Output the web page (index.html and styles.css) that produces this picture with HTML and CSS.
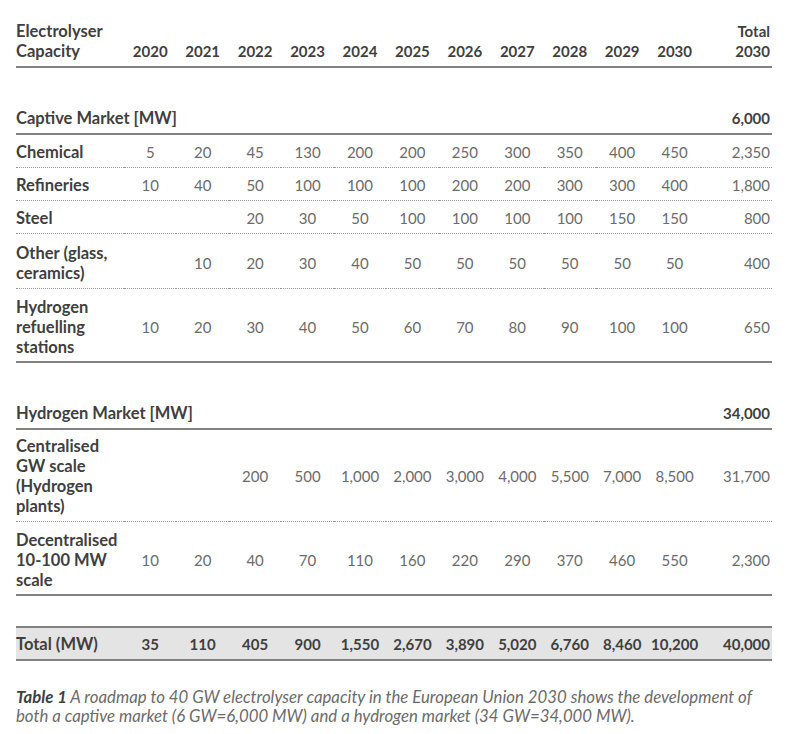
FILE: index.html
```html
<!DOCTYPE html>
<html lang="en">
<head>
<meta charset="utf-8">
<title>Electrolyser capacity roadmap</title>
<link rel="stylesheet" href="styles.css">
</head>
<body>
<div class="page">
<table class="roadmap">
  <colgroup>
    <col class="c-label">
    <col class="c-year"><col class="c-year"><col class="c-year"><col class="c-year"><col class="c-year"><col class="c-year"><col class="c-year"><col class="c-year"><col class="c-year"><col class="c-year"><col class="c-year">
    <col class="c-total">
  </colgroup>
  <thead>
    <tr class="head">
      <th class="label">Electrolyser<br>Capacity</th>
      <th>2020</th><th>2021</th><th>2022</th><th>2023</th><th>2024</th><th>2025</th><th>2026</th><th>2027</th><th>2028</th><th>2029</th><th>2030</th>
      <th class="total">Total<br>2030</th>
    </tr>
  </thead>
  <tbody>
    <tr class="section">
      <th class="label" colspan="12">Captive Market [MW]</th>
      <th class="total">6,000</th>
    </tr>
    <tr class="row dotted">
      <th class="label">Chemical</th>
      <td>5</td><td>20</td><td>45</td><td>130</td><td>200</td><td>200</td><td>250</td><td>300</td><td>350</td><td>400</td><td>450</td>
      <td class="total">2,350</td>
    </tr>
    <tr class="row dotted">
      <th class="label">Refineries</th>
      <td>10</td><td>40</td><td>50</td><td>100</td><td>100</td><td>100</td><td>200</td><td>200</td><td>300</td><td>300</td><td>400</td>
      <td class="total">1,800</td>
    </tr>
    <tr class="row dotted">
      <th class="label">Steel</th>
      <td></td><td></td><td>20</td><td>30</td><td>50</td><td>100</td><td>100</td><td>100</td><td>100</td><td>150</td><td>150</td>
      <td class="total">800</td>
    </tr>
    <tr class="row dotted tall">
      <th class="label">Other (glass,<br>ceramics)</th>
      <td></td><td>10</td><td>20</td><td>30</td><td>40</td><td>50</td><td>50</td><td>50</td><td>50</td><td>50</td><td>50</td>
      <td class="total">400</td>
    </tr>
    <tr class="row solid tall">
      <th class="label">Hydrogen<br>refuelling<br>stations</th>
      <td>10</td><td>20</td><td>30</td><td>40</td><td>50</td><td>60</td><td>70</td><td>80</td><td>90</td><td>100</td><td>100</td>
      <td class="total">650</td>
    </tr>
    <tr class="section">
      <th class="label" colspan="12">Hydrogen Market [MW]</th>
      <th class="total">34,000</th>
    </tr>
    <tr class="row dotted tall">
      <th class="label">Centralised<br>GW scale<br>(Hydrogen<br>plants)</th>
      <td></td><td></td><td>200</td><td>500</td><td>1,000</td><td>2,000</td><td>3,000</td><td>4,000</td><td>5,500</td><td>7,000</td><td>8,500</td>
      <td class="total">31,700</td>
    </tr>
    <tr class="row solid tall">
      <th class="label">Decentralised<br>10-100 MW<br>scale</th>
      <td>10</td><td>20</td><td>40</td><td>70</td><td>110</td><td>160</td><td>220</td><td>290</td><td>370</td><td>460</td><td>550</td>
      <td class="total">2,300</td>
    </tr>
  </tbody>
  <tfoot>
    <tr class="sum">
      <th class="label">Total (MW)</th>
      <td>35</td><td>110</td><td>405</td><td>900</td><td>1,550</td><td>2,670</td><td>3,890</td><td>5,020</td><td>6,760</td><td>8,460</td><td>10,200</td>
      <td class="total">40,000</td>
    </tr>
  </tfoot>
</table>
<p class="caption"><b>Table 1</b> A roadmap to 40 GW electrolyser capacity in the European Union 2030 shows the development of both a captive market (6 GW=6,000 MW) and a hydrogen market (34 GW=34,000 MW).</p>
</div>
</body>
</html>
```
FILE: styles.css
```css
html, body {
  margin: 0;
  padding: 0;
  background: #ffffff;
}

.page {
  padding: 21px 18px 0 16px;
  font-family: Lato, "Open Sans", "Liberation Sans", sans-serif;
  font-size: 15px;
  line-height: 20px;
  color: #6b6b6b;
}

.roadmap {
  width: 756px;
  table-layout: fixed;
  border-collapse: collapse;
  border-spacing: 0;
}

.c-label { width: 108px; }
.c-year { width: 52.45px; }
.c-total { width: 71px; }

.roadmap th,
.roadmap td {
  padding: 0;
  text-align: center;
  vertical-align: middle;
  white-space: nowrap;
}

.roadmap th {
  font-weight: 700;
  color: #3f3f3f;
}

.roadmap .label {
  text-align: left;
  font-size: 16.5px;
}

.roadmap .total {
  text-align: right;
  padding-right: 2px;
}

.roadmap td.total {
  color: #6b6b6b;
}

/* header row */
.head th {
  vertical-align: bottom;
  padding-bottom: 5px;
  border-bottom: 2px solid #828282;
}

/* section headings */
.section th {
  padding-top: 40px;
  padding-bottom: 5px;
  border-bottom: 2px solid #828282;
}

/* data rows */
.row th,
.row td {
  padding-top: 7px;
  padding-bottom: 5px;
}

.row.tall th,
.row.tall td {
  padding-top: 8.5px;
}

.section + .row.tall th,
.section + .row.tall td {
  padding-top: 5.5px;
}

.row.dotted th,
.row.dotted td {
  border-bottom: 1px dotted #9a9a9a;
}

.row.solid th,
.row.solid td {
  padding-bottom: 4px;
  border-bottom: 2px solid #828282;
}

/* total row */
.roadmap tfoot::before {
  content: "";
  display: table-row;
  height: 31.5px;
}

.sum th,
.sum td {
  background: #e4e4e4;
  border-top: 2px solid #828282;
  border-bottom: 2px solid #828282;
  padding-top: 6px;
  padding-bottom: 5px;
  font-weight: 700;
  color: #3f3f3f;
}

.roadmap .sum td.total {
  color: #3f3f3f;
}

.caption {
  margin: 26px 0 0 0;
  max-width: 760px;
  font-size: 16.8px;
  font-style: italic;
  color: #6b6b6b;
  line-height: 19.5px;
}

.caption b {
  color: #3f3f3f;
}
```
